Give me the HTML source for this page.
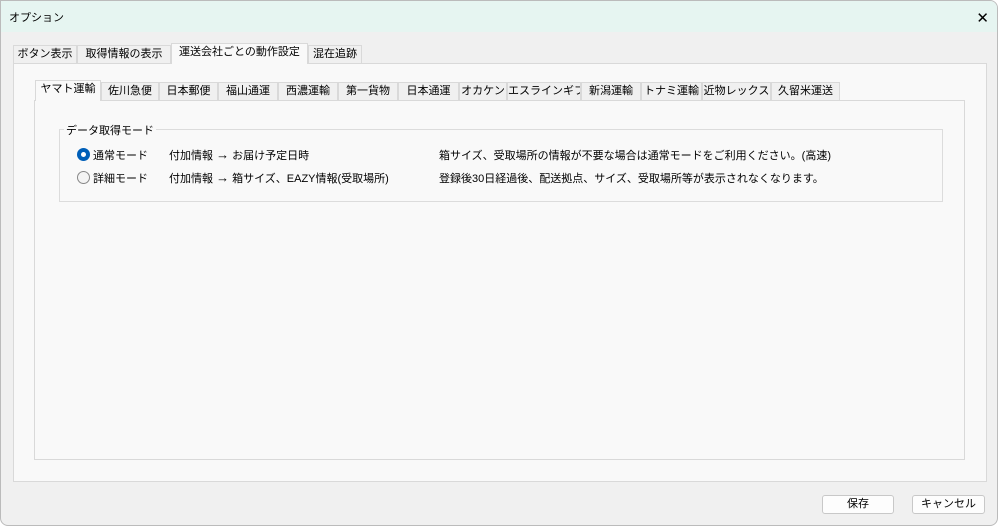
<!DOCTYPE html>
<html><head><meta charset="utf-8"><style>
*{margin:0;padding:0;box-sizing:border-box}
body{width:1000px;height:527px;background:#fff;font-family:"Liberation Sans","Noto Sans CJK JP",sans-serif;font-size:11px;color:#000;position:relative;overflow:hidden}
.win{position:absolute;left:0;top:0;width:998px;height:526px;background:#f0f0f0;border:1px solid #bbb;border-radius:0 8px 8px 8px;overflow:hidden}
.title{position:absolute;left:0;top:0;width:100%;height:31px;background:#e6f5f1}
.title span{position:absolute;left:8px;top:8px}
.x{position:absolute;right:8px;top:5px;font-size:15px}
.tab{position:absolute;height:18px;border:1px solid #d9d9d9;border-bottom:none;background:#f0f0f0;text-align:center;line-height:17px;white-space:nowrap;overflow:hidden}
.sel{background:#f9f9f9;height:21px;z-index:2}
.pane{position:absolute;background:#f9f9f9;border:1px solid #d9d9d9}
.grp{position:absolute;left:58px;top:128px;width:884px;height:73px;border:1px solid #dcdcdc}
.lg{position:absolute;left:63px;top:121px;background:#f9f9f9;padding:0 2px}
.t{position:absolute;white-space:nowrap}
.rad{position:absolute;width:13px;height:13px;border-radius:50%}
.btn{position:absolute;top:494px;height:19px;border:1px solid #c8c8c8;border-radius:3px;background:#fdfdfd;text-align:center;line-height:17px}
</style></head><body>
<div class="win">
<div class="title"><span>オプション</span><span class="x" style="left:auto">✕</span></div>
<div class="pane" style="left:12px;top:62px;width:974px;height:419px"></div>
<div class="tab" style="left:12px;top:44px;width:64px">ボタン表示</div>
<div class="tab" style="left:76px;top:44px;width:94px">取得情報の表示</div>
<div class="tab sel" style="left:170px;top:42px;width:137px">運送会社ごとの動作設定</div>
<div class="tab" style="left:307px;top:44px;width:54px">混在追跡</div>

<div class="pane" style="left:33px;top:99px;width:931px;height:360px"></div>
<div class="tab sel" style="left:34px;top:79px;width:66px">ヤマト運輸</div>
<div class="tab" style="left:100px;top:81px;width:58px">佐川急便</div>
<div class="tab" style="left:158px;top:81px;width:59px">日本郵便</div>
<div class="tab" style="left:217px;top:81px;width:60px">福山通運</div>
<div class="tab" style="left:277px;top:81px;width:60px">西濃運輸</div>
<div class="tab" style="left:337px;top:81px;width:60px">第一貨物</div>
<div class="tab" style="left:397px;top:81px;width:61px">日本通運</div>
<div class="tab" style="left:458px;top:81px;width:48px">オカケン</div>
<div class="tab" style="left:506px;top:81px;width:74px">エスラインギフ</div>
<div class="tab" style="left:580px;top:81px;width:60px">新潟運輸</div>
<div class="tab" style="left:640px;top:81px;width:61px">トナミ運輸</div>
<div class="tab" style="left:701px;top:81px;width:69px">近物レックス</div>
<div class="tab" style="left:770px;top:81px;width:69px">久留米運送</div>

<div class="grp"></div>
<div class="lg">データ取得モード</div>
<div class="rad" style="left:76px;top:147px;background:#005fb8"><div style="position:absolute;left:4px;top:4px;width:5px;height:5px;border-radius:50%;background:#fff"></div></div>
<div class="t" style="left:92px;top:146px">通常モード</div>
<div class="t" style="left:168px;top:146px">付加情報 <span style="font-size:13px;line-height:11px">→</span> お届け予定日時</div>
<div class="t" style="left:438px;top:146px">箱サイズ、受取場所の情報が不要な場合は通常モードをご利用ください。(高速)</div>
<div class="rad" style="left:76px;top:170px;border:1px solid #888;background:#f4f4f4"></div>
<div class="t" style="left:92px;top:169px">詳細モード</div>
<div class="t" style="left:168px;top:169px">付加情報 <span style="font-size:13px;line-height:11px">→</span> 箱サイズ、EAZY情報(受取場所)</div>
<div class="t" style="left:438px;top:169px">登録後30日経過後、配送拠点、サイズ、受取場所等が表示されなくなります。</div>

<div class="btn" style="left:821px;width:72px">保存</div>
<div class="btn" style="left:911px;width:73px">キャンセル</div>
</div>
</body></html>
